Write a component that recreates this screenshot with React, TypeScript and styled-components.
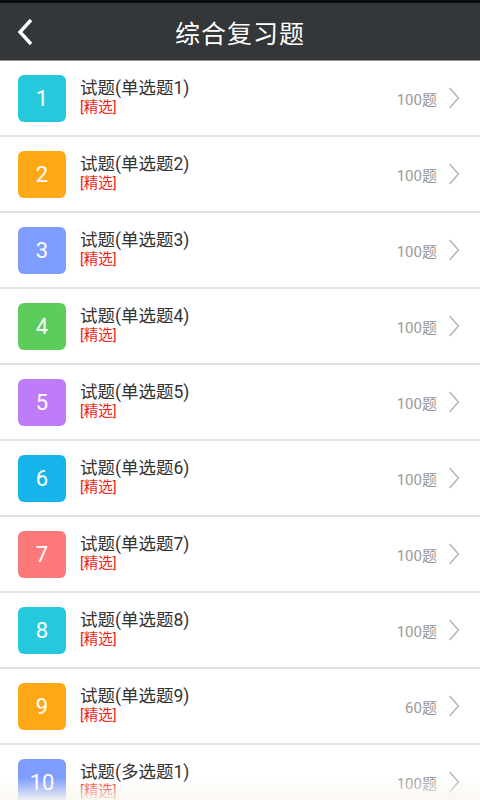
import React from 'react'
import styled, { createGlobalStyle } from 'styled-components'

const GlobalStyle = createGlobalStyle`
  html, body {
    margin: 0;
    padding: 0;
    background: #fff;
    font-family: Roboto, "Noto Sans CJK SC", sans-serif;
  }
`

const Page = styled.div`
  position: relative;
  width: 480px;
  height: 800px;
  overflow: hidden;
  background: #fff;
`

const StatusStrip = styled.div`
  height: 3px;
  background: #0c0c0c;
`

const Header = styled.header`
  position: relative;
  height: 57px;
  display: flex;
  align-items: center;
  justify-content: center;
  background: #33373a;
  border-bottom: 1px solid #8e9092;
`

const BackButton = styled.button`
  position: absolute;
  left: 10px;
  top: 14px;
  width: 30px;
  height: 30px;
  padding: 0;
  border: none;
  background: none;
  display: flex;
  align-items: center;
  justify-content: center;
`

const Title = styled.h1`
  margin: 0;
  color: #fff;
  font-size: 25px;
  font-weight: 400;
  letter-spacing: 1px;
`

const List = styled.ul`
  margin: 0;
  padding: 0;
  list-style: none;
`

const Row = styled.li`
  height: 74px;
  display: flex;
  align-items: center;
  padding: 0 20px 0 18px;
  border-bottom: 2px solid #e3e3e3;
`

const Badge = styled.div<{ $color: string }>`
  width: 48px;
  height: 47px;
  flex-shrink: 0;
  border-radius: 6px;
  background: ${({ $color }) => $color};
  color: #fff;
  font-size: 22px;
  display: flex;
  align-items: center;
  justify-content: center;
`

const Info = styled.div`
  flex: 1;
  margin-left: 14px;
  display: flex;
  flex-direction: column;
  padding-bottom: 2px;
`

const ItemTitle = styled.div`
  color: #333;
  font-size: 17.5px;
  line-height: 21px;
`

const Tag = styled.div`
  color: #f21c1c;
  font-size: 14.5px;
  line-height: 18px;
`

const Count = styled.span`
  color: #9a9a9a;
  font-size: 15px;
  margin-right: 11px;
`

const Fade = styled.div`
  position: absolute;
  left: 0;
  right: 0;
  bottom: 0;
  height: 22px;
  background: linear-gradient(to bottom, rgba(252, 250, 244, 0), rgba(248, 246, 238, 0.92));
  pointer-events: none;
`

const items = [
  { n: 1, title: '试题(单选题1)', count: 100, color: '#26c8db' },
  { n: 2, title: '试题(单选题2)', count: 100, color: '#fea816' },
  { n: 3, title: '试题(单选题3)', count: 100, color: '#7f9dff' },
  { n: 4, title: '试题(单选题4)', count: 100, color: '#5ccd5c' },
  { n: 5, title: '试题(单选题5)', count: 100, color: '#bf7cf8' },
  { n: 6, title: '试题(单选题6)', count: 100, color: '#17b4ec' },
  { n: 7, title: '试题(单选题7)', count: 100, color: '#fd7878' },
  { n: 8, title: '试题(单选题8)', count: 100, color: '#26c8db' },
  { n: 9, title: '试题(单选题9)', count: 60, color: '#fea816' },
  { n: 10, title: '试题(多选题1)', count: 100, color: '#7f9dff' },
]

const Chevron = () => (
  <svg width="12" height="22" viewBox="0 0 12 22">
    <path d="M1.5 1 L10.5 11 L1.5 21" fill="none" stroke="#b8b8b8" strokeWidth="1.6" />
  </svg>
)

const BackIcon = () => (
  <svg width="18" height="28" viewBox="0 0 18 28">
    <path d="M15 2 L4 14 L15 26" fill="none" stroke="#fff" strokeWidth="3.4" />
  </svg>
)

const App = () => {
  return (
    <Page>
      <GlobalStyle />
      <StatusStrip />
      <Header>
        <BackButton>
          <BackIcon />
        </BackButton>
        <Title>综合复习题</Title>
      </Header>
      <List>
        {items.map((item) => (
          <Row key={item.n}>
            <Badge $color={item.color}>{item.n}</Badge>
            <Info>
              <ItemTitle>{item.title}</ItemTitle>
              <Tag>[精选]</Tag>
            </Info>
            <Count>{item.count}题</Count>
            <Chevron />
          </Row>
        ))}
      </List>
      <Fade />
    </Page>
  )
}

export default App
